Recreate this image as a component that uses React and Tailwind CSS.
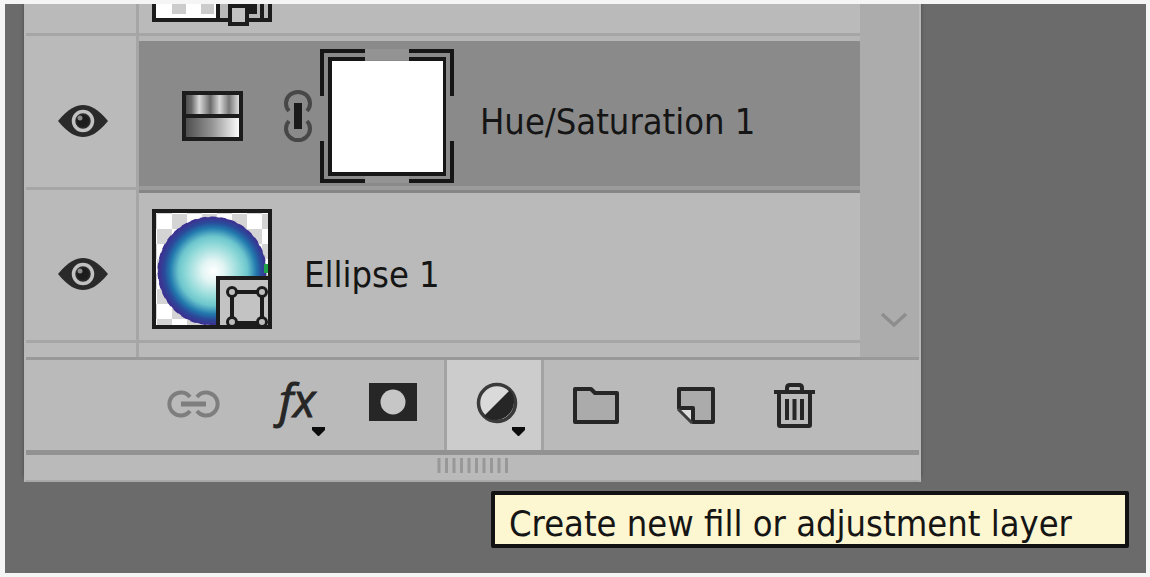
import React from "react";

function EyeIcon() {
  return (
    <svg viewBox="0 0 52 34" className="h-[34px] w-[52px]" aria-hidden="true">
      <path d="M1 17 C12 4 19 1 26 1 C33 1 40 4 51 17 C40 30 33 33 26 33 C19 33 12 30 1 17 Z" fill="#2a2a2a" />
      <circle cx="26" cy="17" r="9.5" fill="#2a2a2a" stroke="#c2c2c2" strokeWidth="3.5" />
      <circle cx="26" cy="17" r="6" fill="#1c1c1c" />
      <circle cx="23" cy="14" r="2.5" fill="#8a8a8a" />
    </svg>
  );
}

function HueSaturationIcon() {
  return (
    <svg viewBox="0 0 61 50" className="h-[50px] w-[61px]" aria-hidden="true">
      <defs>
        <linearGradient id="stripes">
          <stop offset="0" stopColor="#4a4a4a" />
          <stop offset="0.12" stopColor="#6a6a6a" />
          <stop offset="0.26" stopColor="#d8d8d8" />
          <stop offset="0.46" stopColor="#6a6a6a" />
          <stop offset="0.63" stopColor="#d8d8d8" />
          <stop offset="0.8" stopColor="#777777" />
          <stop offset="1" stopColor="#e8e8e8" />
        </linearGradient>
        <linearGradient id="ramp">
          <stop offset="0" stopColor="#4c4c4c" />
          <stop offset="0.5" stopColor="#969696" />
          <stop offset="1" stopColor="#ffffff" />
        </linearGradient>
      </defs>
      <rect x="3" y="3" width="55" height="22" fill="url(#stripes)" />
      <rect x="3" y="26" width="55" height="21" fill="url(#ramp)" />
      <path d="M2 2 H59 V48 H2 Z M2 25 H59" fill="none" stroke="#1c1c1c" strokeWidth="4" />
    </svg>
  );
}

function MaskLinkIcon() {
  return (
    <svg viewBox="0 0 28 54" className="h-[54px] w-7" aria-hidden="true">
      <g fill="none" stroke="#474747" strokeWidth="4">
        <path d="M5 22 A12 11.5 0 1 1 23 22" />
        <path d="M5 32 A12 11.5 0 1 0 23 32" />
      </g>
      <rect x="10" y="14" width="8" height="26" fill="#1a1a1a" />
    </svg>
  );
}

function MaskThumbnail() {
  return (
    <svg viewBox="0 0 134 136" className="h-[136px] w-[134px]" aria-hidden="true">
      <path d="M45 1 H89 V12 H45 Z M45 128 H89 V135 H45 Z" fill="#939393" />
      <g fill="none" stroke="#161616" strokeWidth="4">
        <path d="M2 48 V3 H45 M89 3 H132 V48 M132 93 V133 H89 M45 133 H2 V93" />
        <path d="M45 11 H10 V126 H124 V11 H89" />
      </g>
      <rect x="12" y="13" width="111" height="111" fill="#ffffff" />
    </svg>
  );
}

function EllipseThumbnail() {
  return (
    <svg viewBox="0 0 120 120" className="size-[120px]" aria-hidden="true">
      <defs>
        <pattern id="checker" x="5" y="5" width="30" height="30" patternUnits="userSpaceOnUse">
          <rect width="30" height="30" fill="#ffffff" />
          <path d="M15 0 H30 V15 H15 Z M0 15 H15 V30 H0 Z" fill="#d4d4d4" />
        </pattern>
        <radialGradient id="ball" cx="0.51" cy="0.5" r="0.5">
          <stop offset="0" stopColor="#ffffff" />
          <stop offset="0.2" stopColor="#e3f5f4" />
          <stop offset="0.5" stopColor="#8fd9d8" />
          <stop offset="0.64" stopColor="#6cc6cd" />
          <stop offset="0.8" stopColor="#2279ae" />
          <stop offset="0.9" stopColor="#2a4a9a" />
          <stop offset="1" stopColor="#3d3290" />
        </radialGradient>
      </defs>
      <rect x="2" y="2" width="116" height="116" fill="url(#checker)" />
      <circle cx="60" cy="62" r="54" fill="url(#ball)" />
      <circle cx="60" cy="62" r="53.5" fill="none" stroke="#3b3391" strokeWidth="2" strokeDasharray="6 4" />
      <rect x="112" y="55" width="5" height="9" fill="#1fa04a" />
      <path d="M66 118 V69 H118 V118 Z" fill="#c3c3c3" stroke="#1c1c1c" strokeWidth="4" />
      <g fill="none" stroke="#1c1c1c">
        <path d="M80 83 H110 V114 H80 Z" strokeWidth="4" />
        <g fill="#bdbdbd" strokeWidth="3">
          <circle cx="80" cy="83" r="4.5" />
          <circle cx="110" cy="83" r="4.5" />
          <circle cx="80" cy="113" r="4.5" />
          <circle cx="110" cy="113" r="4.5" />
        </g>
        <path d="M2 2 H118 V118 H2 Z" strokeWidth="4" />
      </g>
    </svg>
  );
}

function ClippedThumbnail() {
  return (
    <svg viewBox="0 0 120 22" className="h-[22px] w-[120px]" aria-hidden="true">
      <rect x="2" y="0" width="64" height="16" fill="#ffffff" />
      <path d="M20 0 H34 V10 H20 Z M49 0 H62 V10 H49 Z" fill="#cccccc" />
      <path d="M66 0 H118 V16 H66 Z" fill="#b9b9b9" />
      <path d="M2 0 V16 H118 V0 M66 0 V16 M110 0 V16" fill="none" stroke="#1c1c1c" strokeWidth="4" />
      <path d="M94 0 H105 V10 H94 Z M76 0 H96 V4 H76 Z" fill="#1c1c1c" />
      <rect x="78" y="2" width="17" height="18" fill="#c3c3c3" stroke="#1c1c1c" strokeWidth="4" />
    </svg>
  );
}

function ToolIcon({ children }) {
  return (
    <svg viewBox="0 0 100 90" className="h-[90px] w-[100px] shrink-0" fill="none" aria-hidden="true">
      {children}
    </svg>
  );
}

const Caret = () => <path d="M68 67 H81 V70 L75 76 H74 L68 70 Z" fill="#0c0c0c" />;

function ToolButton({ label, active, children }) {
  return (
    <button
      type="button"
      aria-label={label}
      className={
        active
          ? "flex h-[90px] w-[100px] items-center justify-center border-x-[3px] border-[#a3a3a3] bg-[#cccccc]"
          : "flex h-[90px] w-[100px] items-center justify-center"
      }
    >
      <ToolIcon>{children}</ToolIcon>
    </button>
  );
}

function Toolbar() {
  return (
    <div role="toolbar" className="flex border-y-[3px] border-t-[#999999] border-b-[#929292] pl-[118px]">
      <ToolButton label="Link layers">
        <g stroke="#7e7e7e" strokeWidth="4">
          <path d="M46 37 A11.5 11.5 0 1 0 46 51" />
          <path d="M53 37 A11.5 11.5 0 1 1 53 51" />
          <path d="M37 44 H62" strokeWidth="5" />
        </g>
      </ToolButton>
      <ToolButton label="Add a layer style">
        <text x="35" y="57" fontFamily="'Open Sans', sans-serif" fontStyle="italic" fontSize="46" fill="#262626" stroke="#262626" strokeWidth="1">
          fx
        </text>
        <Caret />
      </ToolButton>
      <ToolButton label="Add layer mask">
        <rect x="25" y="23" width="48" height="38" fill="#262626" />
        <circle cx="49" cy="42" r="12.5" fill="#c6c6c6" />
      </ToolButton>
      <div className="relative">
        <ToolButton label="Create new fill or adjustment layer" active>
          <circle cx="53" cy="43" r="18.5" fill="#dadada" stroke="#3a3a3a" strokeWidth="3.5" />
          <path d="M66 30 A18.5 18.5 0 0 1 40 56 Z" fill="#262626" />
          <Caret />
        </ToolButton>
        <div
          role="tooltip"
          className="absolute top-[131px] left-[47px] rounded-xs border-4 border-[#121212] bg-[#fcf6d1] pt-2 pr-[53px] pl-[14px] leading-[41px] whitespace-nowrap"
        >
          Create new fill or adjustment layer
        </div>
      </div>
      <ToolButton label="Create a new group">
        <path d="M31 29 H47 L51 33 H73 V62 H31 Z" fill="#ababab" stroke="#262626" strokeWidth="4" strokeLinejoin="round" />
      </ToolButton>
      <ToolButton label="Create a new layer">
        <path d="M35 29 H69 V62 H50 L35 47 Z" fill="#ababab" />
        <path d="M35 48 H49 V62 Z" fill="#dddddd" />
        <path d="M35 49 V29 H69 V62 H49 V48 H35" stroke="#262626" strokeWidth="4" strokeLinejoin="round" />
        <path d="M34 49 L48 63" stroke="#3f3f3f" strokeWidth="3" />
      </ToolButton>
      <ToolButton label="Delete layer">
        <g stroke="#262626" strokeWidth="4">
          <path d="M30 32 H71" />
          <path d="M43 31 V28 Q43 25 46 25 H55 Q58 25 58 28 V31" />
          <path d="M35 32 V65 Q35 66 36 66 H65 Q66 66 66 65 V32" />
          <path d="M43 39 V60 M50.5 39 V60 M58 39 V60" />
        </g>
      </ToolButton>
    </div>
  );
}

function VisibilityCell({ label }) {
  return (
    <div className="flex w-[113px] shrink-0 items-center justify-center border-r-[3px] border-b-[3px] border-[#a6a6a6] pt-[18px] pl-1">
      <button type="button" aria-label={label} aria-pressed="true">
        <EyeIcon />
      </button>
    </div>
  );
}

function LayerList() {
  return (
    <div className="flex">
      <ul className="min-w-0 flex-1">
        <li className="flex h-8">
          <div className="w-[113px] shrink-0 border-r-[3px] border-b-[3px] border-[#a6a6a6]" />
          <div className="flex-1 border-b-[3px] border-[#a6a6a6] pl-[13px]">
            <ClippedThumbnail />
          </div>
        </li>
        <li className="flex h-[154px]">
          <VisibilityCell label="Toggle Hue/Saturation 1" />
          <div className="flex flex-1 items-center border-t-[5px] border-b-4 border-t-[#b6b6b6] border-b-[#9b9b9b] bg-[#8a8a8a] pt-1 pl-[43px]">
            <HueSaturationIcon />
            <span className="ml-[41px]">
              <MaskLinkIcon />
            </span>
            <span className="ml-2">
              <MaskThumbnail />
            </span>
            <span className="ml-[26px] pt-3">Hue/Saturation 1</span>
          </div>
        </li>
        <li className="flex h-[153px]">
          <VisibilityCell label="Toggle Ellipse 1" />
          <div className="flex flex-1 items-center border-y-[3px] border-t-[#868686] border-b-[#a6a6a6] pt-1 pl-[13px]">
            <EllipseThumbnail />
            <span className="ml-8 pt-3">Ellipse 1</span>
          </div>
        </li>
        <li className="flex h-[14px]">
          <div className="w-[113px] border-r-[3px] border-[#a6a6a6]" />
        </li>
      </ul>
      <div className="flex w-[59px] shrink-0 flex-col justify-end bg-[#acacac]">
        <button type="button" aria-label="Scroll down" className="flex justify-center pt-4 pb-[29px] pl-2">
          <svg viewBox="0 0 28 16" className="h-4 w-7" aria-hidden="true">
            <path d="M2 2 L14 13 L26 2" fill="none" stroke="#8d8d8d" strokeWidth="3.5" />
          </svg>
        </button>
      </div>
    </div>
  );
}

function ResizeGrip() {
  return (
    <div className="flex h-[27px] justify-center border-t-2 border-[#929292] pt-[3px]">
      <svg viewBox="0 0 74 15" className="h-[15px] w-[74px]" aria-hidden="true">
        <path
          d="M3 0 V15 M10.5 0 V15 M18 0 V15 M25.5 0 V15 M33 0 V15 M40.5 0 V15 M48 0 V15 M55.5 0 V15 M63 0 V15 M70.5 0 V15"
          stroke="#989898"
          strokeWidth="3"
        />
      </svg>
    </div>
  );
}

export default function App() {
  return (
    <main className="flex min-h-screen flex-col bg-[#f5f5f5] p-1 pl-[5px] font-['DejaVu_Sans_Condensed','DejaVu_Sans',sans-serif] text-[36px] leading-10 text-[#151515]">
      <div className="flex-1 overflow-clip bg-[#6b6b6b] pr-[225px] pl-[19px]">
        <section className="border-x-2 border-b-2 border-x-[#b9b9b9] border-b-[#a8a8a8] bg-[#bababa] shadow-[0_-5px_4px_#00000050]">
          <LayerList />
          <Toolbar />
          <ResizeGrip />
        </section>
      </div>
    </main>
  );
}
